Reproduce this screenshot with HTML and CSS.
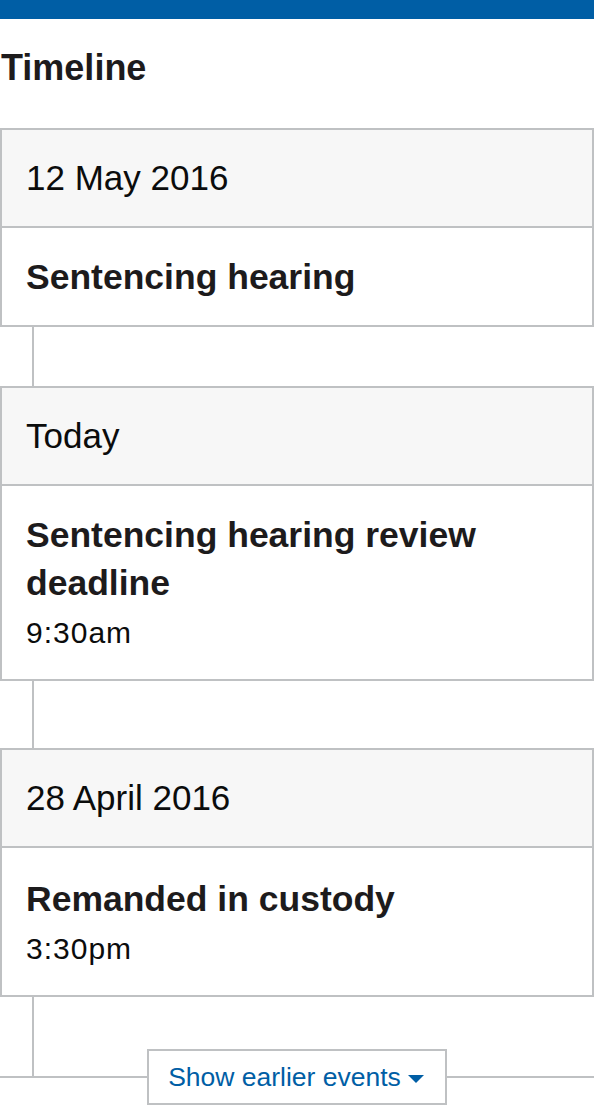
FILE: index.html
```html
<!DOCTYPE html>
<html lang="en">
<head>
<meta charset="utf-8">
<title>Timeline</title>
<link rel="stylesheet" href="styles.css">
</head>
<body>
<div class="top-bar"></div>
<main class="timeline">
  <h2 class="timeline__heading">Timeline</h2>
  <div class="timeline__list">
    <section class="event">
      <div class="event__date">12 May 2016</div>
      <div class="event__body">
        <h3 class="event__title">Sentencing hearing</h3>
      </div>
    </section>
    <div class="connector connector--short"></div>
    <section class="event">
      <div class="event__date">Today</div>
      <div class="event__body">
        <h3 class="event__title">Sentencing hearing review deadline</h3>
        <p class="event__time">9:30am</p>
      </div>
    </section>
    <div class="connector"></div>
    <section class="event">
      <div class="event__date">28 April 2016</div>
      <div class="event__body event__body--loose">
        <h3 class="event__title">Remanded in custody</h3>
        <p class="event__time">3:30pm</p>
      </div>
    </section>
    <div class="connector connector--end"></div>
  </div>
  <div class="more">
    <button class="more__button" type="button">Show earlier events<svg class="more__icon" width="16" height="8" viewBox="0 0 16 8" aria-hidden="true"><path d="M0 0 H16 L8 8 Z" fill="#005ea5"/></svg></button>
  </div>
</main>
</body>
</html>
```

FILE: styles.css
```css
* {
  box-sizing: border-box;
}

html, body {
  margin: 0;
  padding: 0;
  background: #ffffff;
}

body {
  font-family: "Liberation Sans", Arial, sans-serif;
  color: #0b0c0c;
  width: 594px;
}

.top-bar {
  height: 19px;
  background: #005ea5;
}

.timeline__heading {
  margin: 27px 0 38px 1px;
  font-size: 36px;
  line-height: 44px;
  font-weight: 700;
  color: #1d1b1c;
}

.event {
  border: 2px solid #bfc1c3;
  background: #ffffff;
}

.event__date {
  background: #f7f7f7;
  border-bottom: 2px solid #bfc1c3;
  padding: 24px 24px 24px 24px;
  font-size: 35px;
  line-height: 48px;
}

.event__body {
  padding: 25px 24px 24px 24px;
}

.event__body--loose {
  padding-top: 27px;
}

.event__title {
  margin: 0;
  font-size: 35.5px;
  line-height: 48px;
  font-weight: 700;
  color: #1d1b1c;
}

.event__time {
  margin: 4px 0 0 0;
  font-size: 30px;
  line-height: 44px;
  letter-spacing: 1px;
}

.connector {
  width: 2px;
  margin-left: 32px;
  height: 67px;
  background: #bfc1c3;
}

.connector--short {
  height: 59px;
}

.connector--end {
  height: 80px;
}

.more {
  display: flex;
  align-items: center;
  margin-top: -28px;
}

.more::before,
.more::after {
  content: "";
  flex: 1;
  height: 2px;
  background: #bfc1c3;
}

.more__button {
  display: flex;
  align-items: center;
  gap: 7px;
  height: 56px;
  padding: 0 21px 0 19px;
  border: 2px solid #bfc1c3;
  border-radius: 0;
  background: #ffffff;
  color: #005ea5;
  font-family: "Liberation Sans", Arial, sans-serif;
  font-size: 26.5px;
  line-height: 1;
  cursor: pointer;
}

.more__icon {
  display: block;
  margin-top: 3px;
}
```
